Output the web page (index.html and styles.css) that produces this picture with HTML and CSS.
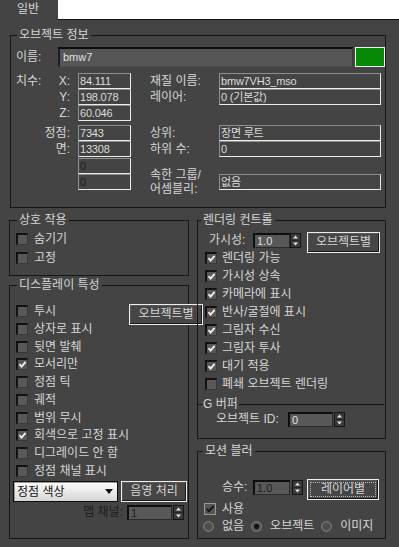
FILE: index.html
```html
<!DOCTYPE html>
<html>
<head>
    <meta charset="utf-8" />
    <title>오브젝트 특성</title>
    <link rel="stylesheet" href="styles.css">
</head>
<body>
    <div class="tabbar">
        <div class="tab">일반</div>
        <div class="tab-fill"></div>
    </div>
    <div class="page">
        <div class="group info">
            <div class="gtitle">오브젝트 정보</div>
            <div class="name-row">
                <span class="name-label">이름:</span>
                <span class="name-input">bmw7</span>
                <span class="swatch"></span>
            </div>
            <div class="info-grid">
                <span class="lab-a split"><span>치수:</span><span>X:</span></span>
                <span class="field">84.111</span>
                <span class="lab-c">재질 이름:</span>
                <span class="field">bmw7VH3_mso</span>

                <span class="lab-a">Y:</span>
                <span class="field">198.078</span>
                <span class="lab-c">레이어:</span>
                <span class="field">0 (기본값)</span>

                <span class="lab-a">Z:</span>
                <span class="field">60.046</span>
                <span></span>
                <span></span>

                <span class="lab-a gap4">정점:</span>
                <span class="field">7343</span>
                <span class="lab-c">상위:</span>
                <span class="field">장면 루트</span>

                <span class="lab-a">면:</span>
                <span class="field">13308</span>
                <span class="lab-c">하위 수:</span>
                <span class="field">0</span>

                <span></span>
                <span class="field dim gap1">0</span>
                <span></span>
                <span></span>

                <span></span>
                <span class="field dim">0</span>
                <span class="lab-c two"><span>속한 그룹/</span><span>어셈블리:</span></span>
                <span class="field">없음</span>
            </div>
        </div>

        <div class="cols">
            <div class="col-left">
                <div class="group interact">
                    <div class="gtitle">상호 작용</div>
                    <div class="list">
                        <div class="row"><span class="cb"></span>숨기기</div>
                        <div class="row"><span class="cb"></span>고정</div>
                    </div>
                </div>

                <div class="group display">
                    <div class="gtitle">디스플레이 특성</div>
                    <div class="disp-body">
                        <div class="list">
                            <div class="row"><span class="cb"></span>투시</div>
                            <div class="row"><span class="cb"></span>상자로 표시</div>
                            <div class="row"><span class="cb"></span>뒷면 발췌</div>
                            <div class="row"><span class="cb"><svg viewBox="0 0 9 9"><path d="M1.5 4.2 L3.6 6.6 L7.6 1.8" /></svg></span>모서리만</div>
                            <div class="row"><span class="cb"></span>정점 틱</div>
                            <div class="row"><span class="cb"></span>궤적</div>
                            <div class="row"><span class="cb"></span>범위 무시</div>
                            <div class="row"><span class="cb"><svg viewBox="0 0 9 9"><path d="M1.5 4.2 L3.6 6.6 L7.6 1.8" /></svg></span>회색으로 고정 표시</div>
                            <div class="row"><span class="cb"></span>디그레이드 안 함</div>
                            <div class="row"><span class="cb"></span>정점 채널 표시</div>
                        </div>
                        <div class="btn btn-obj">오브젝트별</div>
                    </div>
                    <div class="drop-row">
                        <div class="dropdown">
                            <span>정점 색상</span>
                            <svg width="8" height="5" viewBox="0 0 8 5"><path d="M0 0 H8 L4 5Z" fill="#111" /></svg>
                        </div>
                        <div class="btn btn-shade">음영 처리</div>
                    </div>
                    <div class="map-row">
                        <span class="map-label">맵 채널:</span>
                        <span class="spin-field map-field dim">1</span>
                        <svg class="arrows" width="11" height="15" viewBox="0 0 11 15"><rect x="0.5" y="0.5" width="10" height="14" fill="#3b3b3b" stroke="#151515" /><path d="M1.5 7.5 H9.5" stroke="#222" /><path d="M5.5 2.5 L8 5.5 H3Z M3 9.5 H8 L5.5 12.5Z" fill="#e4e4e4" /></svg>
                    </div>
                </div>
            </div>

            <div class="col-right">
                <div class="group render">
                    <div class="gtitle">렌더링 컨트롤</div>
                    <div class="vis-row">
                        <span class="vis-label">가시성:</span>
                        <span class="spin-field vis-field">1.0</span>
                        <svg class="arrows" width="11" height="15" viewBox="0 0 11 15"><rect x="0.5" y="0.5" width="10" height="14" fill="#3b3b3b" stroke="#151515" /><path d="M1.5 7.5 H9.5" stroke="#222" /><path d="M5.5 2.5 L8 5.5 H3Z M3 9.5 H8 L5.5 12.5Z" fill="#e4e4e4" /></svg>
                        <div class="btn btn-vis">오브젝트별</div>
                    </div>
                    <div class="list">
                        <div class="row"><span class="cb"><svg viewBox="0 0 9 9"><path d="M1.5 4.2 L3.6 6.6 L7.6 1.8" /></svg></span>렌더링 가능</div>
                        <div class="row"><span class="cb"><svg viewBox="0 0 9 9"><path d="M1.5 4.2 L3.6 6.6 L7.6 1.8" /></svg></span>가시성 상속</div>
                        <div class="row"><span class="cb"><svg viewBox="0 0 9 9"><path d="M1.5 4.2 L3.6 6.6 L7.6 1.8" /></svg></span>카메라에 표시</div>
                        <div class="row"><span class="cb"><svg viewBox="0 0 9 9"><path d="M1.5 4.2 L3.6 6.6 L7.6 1.8" /></svg></span>반사/굴절에 표시</div>
                        <div class="row"><span class="cb"><svg viewBox="0 0 9 9"><path d="M1.5 4.2 L3.6 6.6 L7.6 1.8" /></svg></span>그림자 수신</div>
                        <div class="row"><span class="cb"><svg viewBox="0 0 9 9"><path d="M1.5 4.2 L3.6 6.6 L7.6 1.8" /></svg></span>그림자 투사</div>
                        <div class="row"><span class="cb"><svg viewBox="0 0 9 9"><path d="M1.5 4.2 L3.6 6.6 L7.6 1.8" /></svg></span>대기 적용</div>
                        <div class="row"><span class="cb"></span>폐쇄 오브젝트 렌더링</div>
                    </div>
                    <div class="gbuf">
                        <div class="gtitle">G 버퍼</div>
                        <div class="id-row">
                            <span class="id-label">오브젝트 ID:</span>
                            <span class="spin-field id-field">0</span>
                            <svg class="arrows" width="11" height="15" viewBox="0 0 11 15"><rect x="0.5" y="0.5" width="10" height="14" fill="#3b3b3b" stroke="#151515" /><path d="M1.5 7.5 H9.5" stroke="#222" /><path d="M5.5 2.5 L8 5.5 H3Z M3 9.5 H8 L5.5 12.5Z" fill="#e4e4e4" /></svg>
                        </div>
                    </div>
                </div>

                <div class="group motion">
                    <div class="gtitle">모션 블러</div>
                    <div class="mult-row">
                        <span class="mult-label">승수:</span>
                        <span class="spin-field vis-field dim">1.0</span>
                        <svg class="arrows" width="11" height="15" viewBox="0 0 11 15"><rect x="0.5" y="0.5" width="10" height="14" fill="#3b3b3b" stroke="#151515" /><path d="M1.5 7.5 H9.5" stroke="#222" /><path d="M5.5 2.5 L8 5.5 H3Z M3 9.5 H8 L5.5 12.5Z" fill="#e4e4e4" /></svg>
                        <div class="btn btn-layer"><span class="focus">레이어별</span></div>
                    </div>
                    <div class="use-row"><span class="cb2"><svg viewBox="0 0 10 10"><path d="M1.8 4.8 L4 7.2 L8.4 2.2" /></svg></span>사용</div>
                    <div class="radio-row">
                        <span class="radio"><svg width="11" height="11" viewBox="0 0 11 11"><circle cx="5.5" cy="5.5" r="4.8" fill="#4e4e4e" stroke="#8c8c8c" /></svg>없음</span>
                        <span class="radio"><svg width="11" height="11" viewBox="0 0 11 11"><circle cx="5.5" cy="5.5" r="4.8" fill="#4e4e4e" stroke="#8c8c8c" /><circle cx="5.5" cy="5.5" r="2.5" fill="#111" /></svg>오브젝트</span>
                        <span class="radio"><svg width="11" height="11" viewBox="0 0 11 11"><circle cx="5.5" cy="5.5" r="4.8" fill="#4e4e4e" stroke="#8c8c8c" /></svg>이미지</span>
                    </div>
                </div>
            </div>
        </div>
    </div>
</body>
</html>
```

FILE: styles.css
```css
* {margin: 0;padding: 0;box-sizing: border-box;}
body {
    width: 399px;
    height: 547px;
    overflow: hidden;
    background: #444;
    color: #d6d6d6;
    font: 12px/14px "Liberation Sans", "Noto Sans CJK KR", sans-serif;
}

/* tab strip */
.tabbar {display: flex;height: 20px;}
.tab {width: 58px;padding-left: 17px;line-height: 19px;}
.tab-fill {flex: 1;height: 20px;background: #fff;border-bottom: 1px solid #141414;}

.page {padding-left: 9px;}

/* group boxes */
.group {border: 1px solid #161616;}
.gtitle {width: max-content;margin: -8px 0 0 7px;padding: 0 2px;background: #444;line-height: 14px;}

/* object info */
.info {margin: 15px 0 0 1px;width: 376px;height: 173px;}
.info .gtitle {margin-left: 6px;}
.name-row {display: flex;height: 20px;margin-top: 5px;padding-left: 5px;}
.name-label {width: 42px;line-height: 20px;}
.name-input {
    width: 295px;
    padding-left: 3px;
    background: #565656;
    border-style: solid;
    border-width: 2px 1px 1px 2px;
    border-color: #0e0e0e #3c3c3c #4c4c4c #1e1e1e;
    font-size: 11px;
    line-height: 16px;
    color: #e0e0e0;
}
.swatch {width: 30px;margin-left: 2px;background: #078907;border: 1px solid #f2f2f2;}

.info-grid {display: grid;grid-template-columns: 67px 53px 88px 162px;align-items: end;margin-top: 6px;}
.lab-a {display: flex;align-items: center;justify-content: flex-end;height: 16px;padding: 0 8px 0 5px;}
.lab-a.split {justify-content: space-between;}
.lab-c {display: flex;align-items: center;height: 16px;padding-left: 19px;white-space: nowrap;}
.lab-c.two {flex-direction: column;justify-content: center;align-items: flex-start;}
.field {
    height: 16px;
    padding-left: 1px;
    border: 1px solid;
    border-color: #8e8e8e #ececec #ececec #8e8e8e;
    font-size: 11px;
    line-height: 14px;
    letter-spacing: -0.2px;
    color: #dcdcdc;
    white-space: nowrap;
    overflow: hidden;
}
.gap4 {margin-top: 4px;}
.gap1 {margin-top: 1px;}
.dim {color: #1c1c1c !important;}

/* lower columns */
.cols {display: flex;gap: 8px;margin-top: 12px;}
.col-left {width: 180px;}
.col-right {width: 189px;}

.row {display: flex;height: 18px;line-height: 18px;white-space: nowrap;}
.cb {
    flex: none;
    width: 12px;
    height: 12px;
    margin: 3px 6px 0 0;
    background: #585858;
    border-style: solid;
    border-width: 2px 1px 1px 2px;
    border-color: #121212 #383838 #383838 #121212;
}
.cb svg {display: block;width: 9px;height: 9px;}
.cb path {fill: none;stroke: #f0f0f0;stroke-width: 1.8;}

.interact {height: 56px;}
.interact .list {margin-top: 3px;padding-left: 6px;}
.interact .row {height: 19px;}

.display {height: 254px;margin-top: 9px;}
.disp-body {display: flex;margin-top: 10px;}
.display .list {flex: 1;padding-left: 6px;}
.display .row {height: 17.75px;}

/* buttons */
.btn {
    flex: none;
    height: 21px;
    text-align: center;
    line-height: 19px;
    background: #464646;
    border: 1px solid #ededed;
    box-shadow: inset -1px -1px 0 #1a1a1a, inset 1px 1px 0 #585858;
    white-space: nowrap;
}
.btn-obj {width: 74px;margin: 2px 3px 0 0;}
.btn-shade {width: 66px;}
.btn-vis {width: 73px;margin-left: 6px;}
.btn-layer {width: 72px;margin-left: 4px;padding: 2px;}
.focus {display: block;height: 15px;line-height: 13px;border: 1px dotted #bbb;}

.drop-row {display: flex;gap: 3px;height: 21px;margin: 1.5px 0 0 3px;}
.dropdown {
    display: flex;
    align-items: center;
    justify-content: space-between;
    width: 105px;
    padding: 0 4px 0 3px;
    background: linear-gradient(#fdfdfd, #d6d6d6);
    border: 1px solid #0c0c0c;
    box-shadow: inset 1px 1px 0 #9a9a9a;
    color: #111;
}

/* spinners */
.spin-field {
    flex: none;
    height: 15px;
    margin-top: 1px;
    padding-left: 2px;
    background: #585858;
    border-style: solid;
    border-width: 2px 1px 1px 2px;
    border-color: #0e0e0e #2a2a2a #2a2a2a #0e0e0e;
    font-size: 11px;
    line-height: 12px;
    color: #e0e0e0;
}
.arrows {flex: none;display: block;margin-top: 1px;}

.map-row {display: flex;justify-content: flex-end;height: 15px;margin-top: 3px;padding-right: 4px;}
.map-row .spin-field, .map-row .arrows {margin-top: 0;}
.map-label {line-height: 15px;margin-right: 4px;color: #1c1c1c;}
.map-field {width: 45px;margin-right: 1px;}

.render {height: 219px;}
.render .gtitle {margin-left: 3px;}
.vis-row {display: flex;height: 21px;margin: 5px 0 -4px;padding-left: 11px;}
.vis-label {width: 44px;line-height: 17px;}
.vis-field {width: 37px;}
.render .list {padding-left: 7px;}
.render .cb {margin-right: 5px;}

.gbuf {margin: 11px 1px 0 0;border-top: 1px solid #161616;}
.gbuf .gtitle {margin-left: 4px;padding: 0 1px;}
.id-row {display: flex;height: 15px;margin-top: 1px;padding-left: 18px;}
.id-row .spin-field, .id-row .arrows {margin-top: 0;}
.id-label {width: 72px;line-height: 15px;}
.id-field {width: 45px;margin-right: 1px;}

.motion {height: 88px;margin-top: 12px;}
.motion .gtitle {margin-left: 5px;}
.mult-row {display: flex;height: 21px;margin-top: 21px;padding-left: 24px;}
.mult-label {width: 31px;line-height: 17px;}
.mult-row .arrows {margin-left: 2px;}

.use-row {display: flex;height: 18px;line-height: 18px;padding-left: 6px;}
.cb2 {flex: none;width: 12px;height: 12px;margin: 3px 6px 0 0;background: #555;border: 1px solid #9a9a9a;}
.cb2 svg {display: block;width: 10px;height: 10px;}
.cb2 path {fill: none;stroke: #111;stroke-width: 1.8;}

.radio-row {display: flex;align-items: center;height: 16px;padding-left: 5px;}
.radio {display: flex;align-items: center;margin-right: 7px;white-space: nowrap;}
.radio svg {margin-right: 8px;}
```
